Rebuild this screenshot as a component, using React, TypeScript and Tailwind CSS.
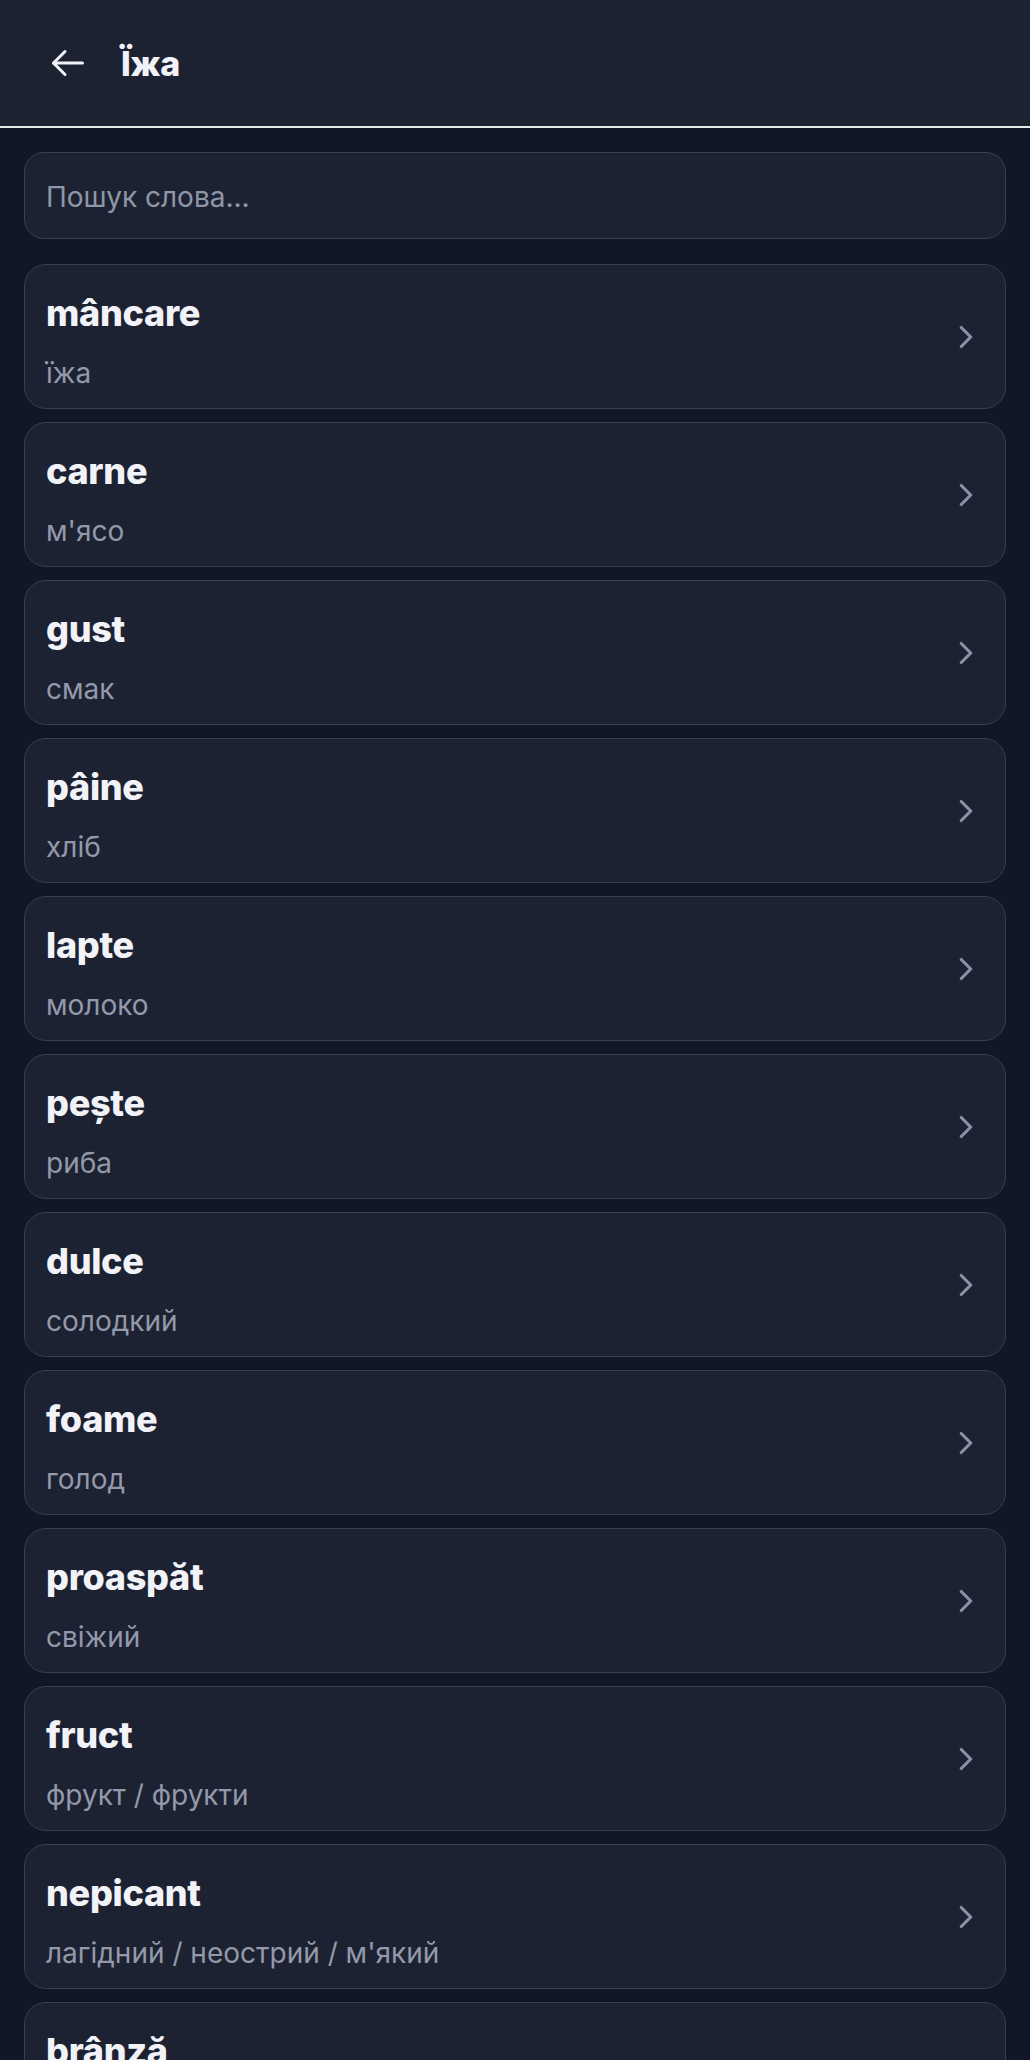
import { ChevronRight } from 'lucide-react';

const words = [
    { ro: 'mâncare', uk: 'їжа' },
    { ro: 'carne', uk: "м'ясо" },
    { ro: 'gust', uk: 'смак' },
    { ro: 'pâine', uk: 'хліб' },
    { ro: 'lapte', uk: 'молоко' },
    { ro: 'pește', uk: 'риба' },
    { ro: 'dulce', uk: 'солодкий' },
    { ro: 'foame', uk: 'голод' },
    { ro: 'proaspăt', uk: 'свіжий' },
    { ro: 'fruct', uk: 'фрукт / фрукти' },
    { ro: 'nepicant', uk: "лагідний / неострий / м'який" },
    { ro: 'brânză', uk: 'сир' },
    { ro: 'apă', uk: 'вода' },
];

function BackArrow() {
    return (
        <svg width="34" height="28" viewBox="0 0 34 28" fill="none" stroke="currentColor" strokeWidth="3" strokeLinecap="round" strokeLinejoin="round">
            <path d="M2.5 14H31.5" />
            <path d="M14 2.5L2.5 14L14 25.5" />
        </svg>
    );
}

export default function App() {
    return (
        <div className="min-h-screen bg-[#111726] font-['Inter','Noto_Sans',sans-serif]">
            {/* Top bar */}
            <header className="flex h-[128px] items-center gap-[36px] border-b-2 border-[#e5e7eb] bg-[#1d2232] pl-[51px]">
                <button type="button" className="text-[#f1f3f8]">
                    <BackArrow />
                </button>
                <h1 className="text-[34px] font-extrabold tracking-[-0.3px] text-[#f1f3f8]">Їжа</h1>
            </header>

            <main className="flex flex-col px-[24px] pt-[24px]">
                <input
                    type="text"
                    placeholder="Пошук слова..."
                    className="h-[87px] w-full rounded-[20px] border border-[#374151] bg-[#1d2232] px-[21px] pt-[2px] text-[28px] text-white outline-none placeholder:text-[#8f96a8]"
                />

                <div className="mt-[25px] flex flex-col gap-[13px]">
                    {words.map((word) => (
                        <div
                            key={word.ro}
                            className="flex h-[145px] shrink-0 items-center justify-between rounded-[22px] border border-[#373e4d] bg-[#1d2232] pl-[21px] pr-[20px]"
                        >
                            <div className="flex flex-col self-start pt-[28px]">
                                <span className="text-[36px] leading-[40px] font-extrabold tracking-[-0.3px] text-[#f1f3f8]">{word.ro}</span>
                                <span className="mt-[23px] text-[28px] leading-[34px] text-[#9399aa]">{word.uk}</span>
                            </div>
                            <ChevronRight size={38} strokeWidth={2} className="text-[#8a92a6]" />
                        </div>
                    ))}
                </div>
            </main>
        </div>
    );
}
